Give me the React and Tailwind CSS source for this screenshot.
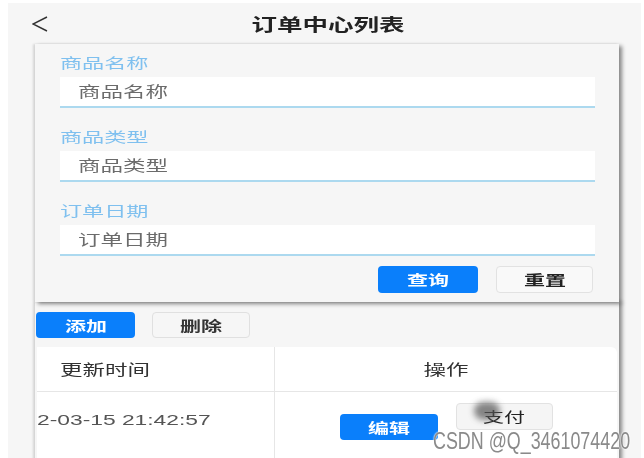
import React from "react";

const F = { fontFamily: '"Noto Sans CJK SC", "Noto Sans", sans-serif' };

function Field({ label }) {
  return (
    <div className="flex flex-col">
      <div className="h-[20px] leading-[20px] text-[14px] text-[#7fc0ef]">
        <span className="inline-block origin-left scale-x-[1.58]">{label}</span>
      </div>
      <div className="mt-[5px] h-[31px] bg-white border-b-2 border-[#acd9ef] flex items-center pl-[18px] text-[15px] text-[#6b6b6b]">
        <span className="inline-block origin-left scale-x-150">{label}</span>
      </div>
    </div>
  );
}

export default function App() {
  return (
    <div className="w-[644px] h-[458px] overflow-hidden bg-white pl-[8px] pt-[3px] pr-[3px]" style={F}>
      <div className="relative h-full bg-[#f6f6f6] flex flex-col">
        {/* header */}
        <div className="h-[41px] flex items-center shrink-0">
          <div className="w-[63px] pl-[24px] flex items-center">
            <svg width="16" height="16" viewBox="0 0 16 16">
              <polyline points="15,1 1,8 15,15" fill="none" stroke="#333" strokeWidth="1.4" />
            </svg>
          </div>
          <div className="flex-1 text-center text-[17px] font-bold text-[#222]">
            <span className="inline-block origin-center scale-x-150">订单中心列表</span>
          </div>
          <div className="w-[57px]" />
        </div>

        {/* search card */}
        <div className="ml-[27px] w-[584px] shrink-0 bg-[#f6f6f6] pt-[8px] pl-[25px] pr-[24px] pb-[9px] shadow-[3px_2px_4px_rgba(0,0,0,0.45),-2px_0_2px_rgba(0,0,0,0.12)] relative z-10">
          <div className="flex flex-col gap-[18px]">
            <Field label="商品名称" />
            <Field label="商品类型" />
            <Field label="订单日期" />
          </div>
          <div className="mt-[10px] flex justify-end gap-[18px] pr-[2px]">
            <button className="w-[100px] h-[27px] rounded-[4px] bg-[#0a7ffb] text-white text-[14px] font-semibold">
              <span className="inline-block origin-center scale-x-150">查询</span>
            </button>
            <button className="w-[97px] h-[27px] rounded-[4px] bg-[#f9f9f9] border border-[#e2e2e2] text-[#222] text-[14px] font-semibold">
              <span className="inline-block origin-center scale-x-150">重置</span>
            </button>
          </div>
        </div>

        {/* list card */}
        <div className="ml-[27px] w-[584px] flex-1 bg-[#f6f6f6] pt-[10px] shadow-[3px_0_4px_rgba(0,0,0,0.45),-2px_0_2px_rgba(0,0,0,0.12)]">
          <div className="flex gap-[17px] pl-[1px]">
            <button className="w-[99px] h-[26px] rounded-[4px] bg-[#0a7ffb] text-white text-[14px] font-semibold">
              <span className="inline-block origin-center scale-x-150">添加</span>
            </button>
            <button className="w-[98px] h-[26px] rounded-[4px] bg-[#f6f6f6] border border-[#e0e0e0] text-[#333] text-[14px] font-semibold">
              <span className="inline-block origin-center scale-x-150">删除</span>
            </button>
          </div>
          <div className="mt-[9px] ml-[2px] mr-[2px] bg-white rounded-tr-[6px]">
            <div className="h-[45px] flex border-b border-[#e6e6e6]">
              <div className="w-[238px] border-r border-[#e6e6e6] flex items-center pl-[23px] text-[15px] text-[#333]">
                <span className="inline-block origin-left scale-x-150">更新时间</span>
              </div>
              <div className="flex-1 flex items-center justify-center text-[15px] text-[#333]">
                <span className="inline-block origin-center scale-x-150">操作</span>
              </div>
            </div>
            <div className="h-[70px] flex">
              <div className="w-[238px] border-r border-[#e6e6e6] pt-[17px] text-[15px] text-[#555] overflow-hidden" style={{ fontFamily: '"Liberation Sans", sans-serif' }}>
                <span className="inline-block origin-left scale-x-[1.52]">2-03-15 21:42:57</span>
              </div>
              <div className="flex-1 flex justify-center items-start gap-[18px] pt-[11px]">
                <button className="mt-[11px] w-[98px] h-[26px] rounded-[4px] bg-[#0a7ffb] text-white text-[14px] font-semibold">
                  <span className="inline-block origin-center scale-x-150">编辑</span>
                </button>
                <button className="w-[97px] h-[27px] rounded-[4px] bg-[#f5f5f5] border border-[#e2e2e2] text-[#222] text-[14px]">
                  <span className="inline-block origin-center scale-x-150">支付</span>
                </button>
              </div>
            </div>
          </div>
        </div>

        {/* cursor blob overlay */}
        <div className="absolute left-[466px] top-[399px] w-[26px] h-[18px] rounded-full bg-[#555] opacity-70 blur-[3px]" />

        {/* watermark */}
        <div
          className="absolute left-[425px] top-[426px] text-[24px] leading-[24px] text-[#8a8a8a] whitespace-nowrap origin-left scale-x-[0.745]"
          style={{ fontFamily: '"Liberation Sans", sans-serif', textShadow: "0 0 2px #fff, 0 0 2px #fff" }}
        >
          CSDN @Q_3461074420
        </div>
      </div>
    </div>
  );
}
